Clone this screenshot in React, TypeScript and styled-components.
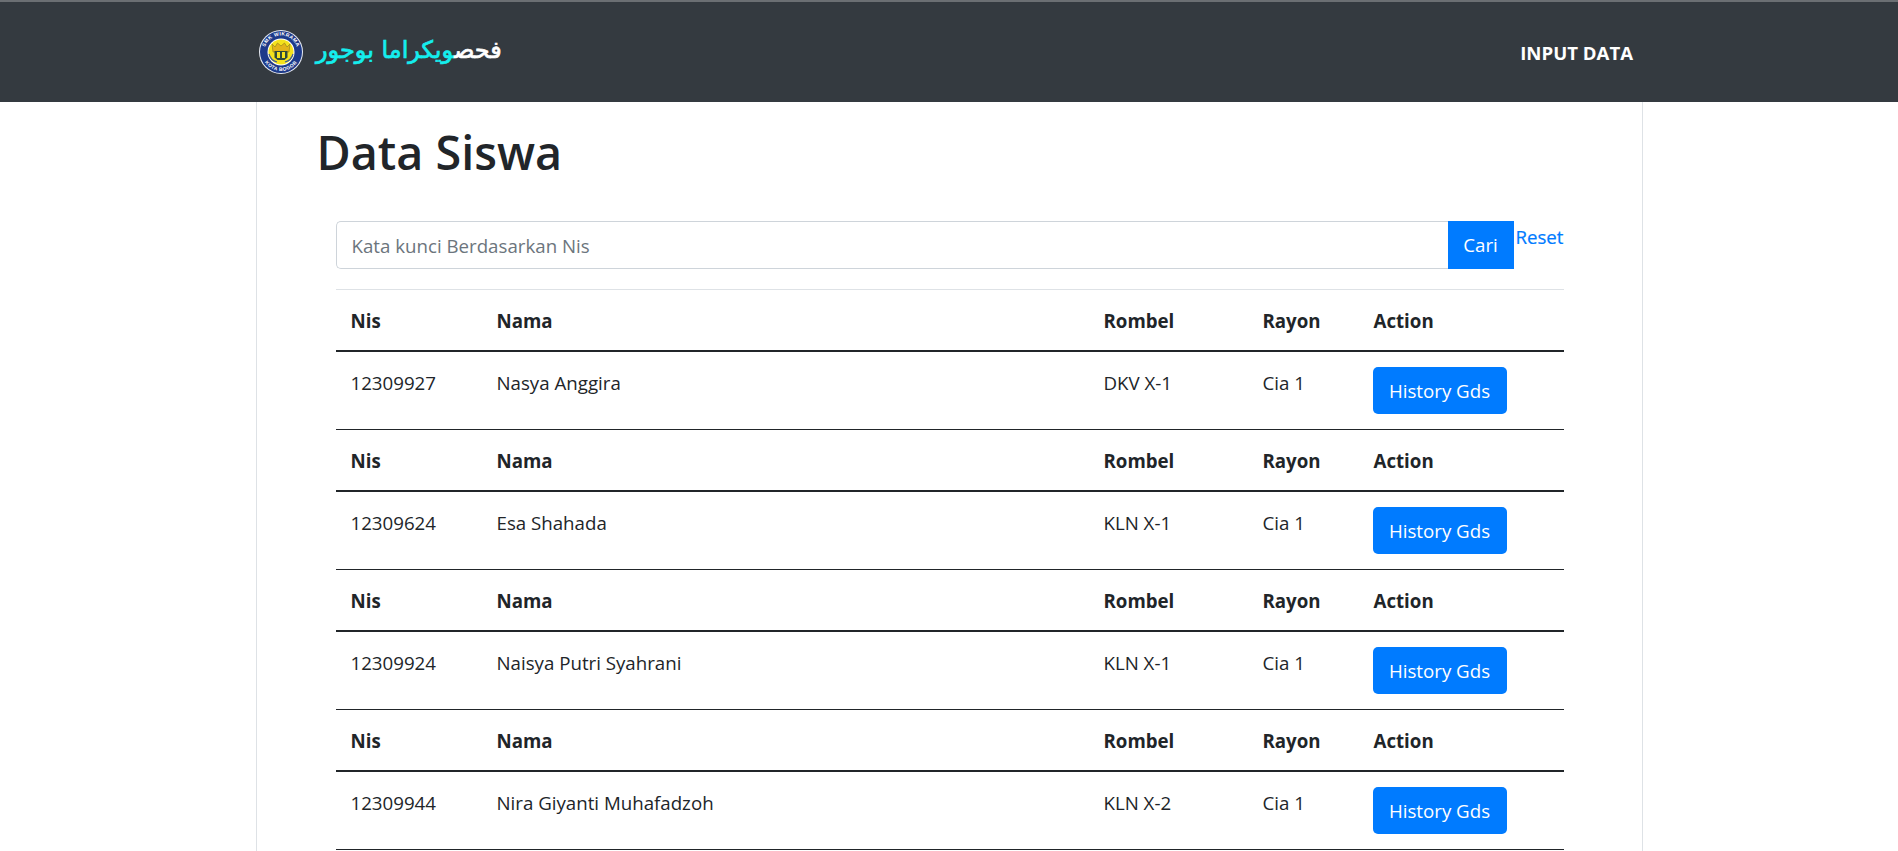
import React from "react";
import styled, { createGlobalStyle } from "styled-components";

const Global = createGlobalStyle`
  html, body { margin: 0; padding: 0; overflow: hidden; background: #fff; }
  body {
    font-family: "Open Sans", "Noto Sans", "Liberation Sans", sans-serif;
    font-size: 18.7px;
    line-height: 30px;
    color: #212529;
  }
  * { box-sizing: border-box; }
`;

const NavBar = styled.nav`
  height: 102px;
  background: #343a40;
  border-top: 2px solid #6b6f73;
  display: flex;
  align-items: center;
  justify-content: space-between;
  padding: 0 265px 0 259px;
`;
const Brand = styled.a`
  display: flex;
  align-items: center;
  gap: 13px;
  font-family: "DejaVu Sans", sans-serif;
  font-size: 24px;
  font-weight: 400;
  direction: rtl;
  flex-direction: row-reverse;
  color: #fff;
`;
const BrandText = styled.span`
  direction: rtl;
  margin-top: -4px;
  -webkit-text-stroke: 0.7px currentColor;
`;
const Accent = styled.span`
  color: #14eeee;
`;
const NavLink = styled.a`
  color: #fff;
  font-weight: 700;
  font-size: 18.6px;
  margin-top: 1px;
`;
const Page = styled.main`
  width: 1387px;
  min-height: 749px;
  margin: 0 auto;
  border-left: 1px solid #dee2e6;
  border-right: 1px solid #dee2e6;
  padding: 20px 78px 0 60px;
`;
const Title = styled.h1`
  margin: 0 0 39px;
  font-size: 46.7px;
  line-height: 60px;
  font-weight: 600;
`;
const Section = styled.section`
  margin-left: 19px;
`;
const SearchForm = styled.form`
  display: flex;
  align-items: flex-start;
  height: 48px;
`;
const SearchInput = styled.input`
  flex: 1;
  height: 48px;
  padding: 0 15px;
  border: 1px solid #ced4da;
  border-right: 0;
  border-radius: 5px 0 0 5px;
  font: inherit;
  color: #495057;
  outline: none;
  &::placeholder { color: #6c757d; opacity: 1; }
`;
const SearchButton = styled.button`
  width: 66px;
  height: 48px;
  border: 0;
  padding: 0;
  background: #007bff;
  color: #fff;
  font: inherit;
`;
const ResetLink = styled.a`
  width: 50px;
  color: #007bff;
  line-height: 30px;
  text-align: right;
  margin-top: 1px;
  white-space: nowrap;
  -webkit-text-stroke: 0.2px currentColor;
`;
const Divider = styled.hr`
  margin: 20px 0 0;
  border: 0;
  border-top: 1px solid #dee2e6;
`;
const Table = styled.table`
  width: 1228px;
  table-layout: fixed;
  border-collapse: separate;
  border-spacing: 0;
`;
const HeadCell = styled.th`
  height: 62px;
  padding: 16px 15px 14px;
  text-align: left;
  vertical-align: top;
  font-weight: 700;
  border-bottom: 2px solid #212529;
`;
const BodyCell = styled.td<{ $action?: boolean }>`
  height: 78px;
  padding: ${(p) => (p.$action ? "15px" : "16px 15px 14px")};
  vertical-align: top;
  border-bottom: 1px solid #212529;
`;
const HistoryButton = styled.a`
  display: inline-block;
  width: 134px;
  height: 47px;
  margin-left: -1px;
  border-radius: 5px;
  background: #007bff;
  color: #fff;
  text-align: center;
  line-height: 47px;
`;

const Logo = () => (
  <svg width="44" height="44" viewBox="0 0 44 44" aria-hidden="true">
    <circle cx="22" cy="22" r="22" fill="#e8ecf4" />
    <circle cx="22" cy="22" r="21" fill="#1d3a8a" />
    <circle cx="22" cy="22" r="13.500" fill="#fff" />
    <circle cx="22" cy="22" r="12.500" fill="#f4e21c" />
    <defs>
      <path id="logoTop" d="M5.500 22a16.500 16.500 0 0 1 33 0" />
      <path id="logoBottom" d="M3 22a19 19 0 0 0 38 0" />
    </defs>
    <text fontFamily="Liberation Sans, sans-serif" fontSize="5" fontWeight="700" fill="#fff" letterSpacing=".4">
      <textPath href="#logoTop" startOffset="50%" textAnchor="middle">SMK WIKRAMA</textPath>
    </text>
    <text fontFamily="Liberation Sans, sans-serif" fontSize="5" fontWeight="700" fill="#fff" letterSpacing=".4">
      <textPath href="#logoBottom" startOffset="50%" textAnchor="middle">KOTA BOGOR</textPath>
    </text>
    <path d="M13 14l3 3 2.500-4 3.500 3 3.500-3 2.500 4 3-3-1 8H14z" fill="#e3b51a" stroke="#8a7a20" strokeWidth=".6" />
    <path d="M15.500 21h13v6.500l-3 2.500h-7l-3-2.500z" fill="#2f4a3c" />
    <path d="M18 22h3v6h-3zM23 22h3v6h-3z" fill="#f4e21c" />
    <path d="M10 24c1 4 4 7 8 8M34 24c-1 4-4 7-8 8" stroke="#3b5a9a" strokeWidth="1.200" fill="none" />
  </svg>
);

const students = [
  { nis: "12309927", nama: "Nasya Anggira", rombel: "DKV X-1", rayon: "Cia 1" },
  { nis: "12309624", nama: "Esa Shahada", rombel: "KLN X-1", rayon: "Cia 1" },
  { nis: "12309924", nama: "Naisya Putri Syahrani", rombel: "KLN X-1", rayon: "Cia 1" },
  { nis: "12309944", nama: "Nira Giyanti Muhafadzoh", rombel: "KLN X-2", rayon: "Cia 1" },
];

const columnWidths = [146, 607, 159, 111, 205];

export default function App() {
  return (
    <>
      <Global />
      <NavBar>
        <Brand>
          <Logo />
          <BrandText>
            فحص<Accent>ويكراما بوجور</Accent>
          </BrandText>
        </Brand>
        <NavLink>INPUT DATA</NavLink>
      </NavBar>
      <Page>
        <Title>Data Siswa</Title>
        <Section>
          <SearchForm onSubmit={(e) => e.preventDefault()}>
            <SearchInput placeholder="Kata kunci Berdasarkan Nis" />
            <SearchButton>Cari</SearchButton>
            <ResetLink>Reset</ResetLink>
          </SearchForm>
          <Divider />
          <Table>
            <colgroup>
              {columnWidths.map((w, i) => (
                <col key={i} width={w} />
              ))}
            </colgroup>
            {students.map((s) => (
              <tbody key={s.nis}>
                <tr>
                  <HeadCell>Nis</HeadCell>
                  <HeadCell>Nama</HeadCell>
                  <HeadCell>Rombel</HeadCell>
                  <HeadCell>Rayon</HeadCell>
                  <HeadCell>Action</HeadCell>
                </tr>
                <tr>
                  <BodyCell>{s.nis}</BodyCell>
                  <BodyCell>{s.nama}</BodyCell>
                  <BodyCell>{s.rombel}</BodyCell>
                  <BodyCell>{s.rayon}</BodyCell>
                  <BodyCell $action>
                    <HistoryButton>History Gds</HistoryButton>
                  </BodyCell>
                </tr>
              </tbody>
            ))}
          </Table>
        </Section>
      </Page>
    </>
  );
}
